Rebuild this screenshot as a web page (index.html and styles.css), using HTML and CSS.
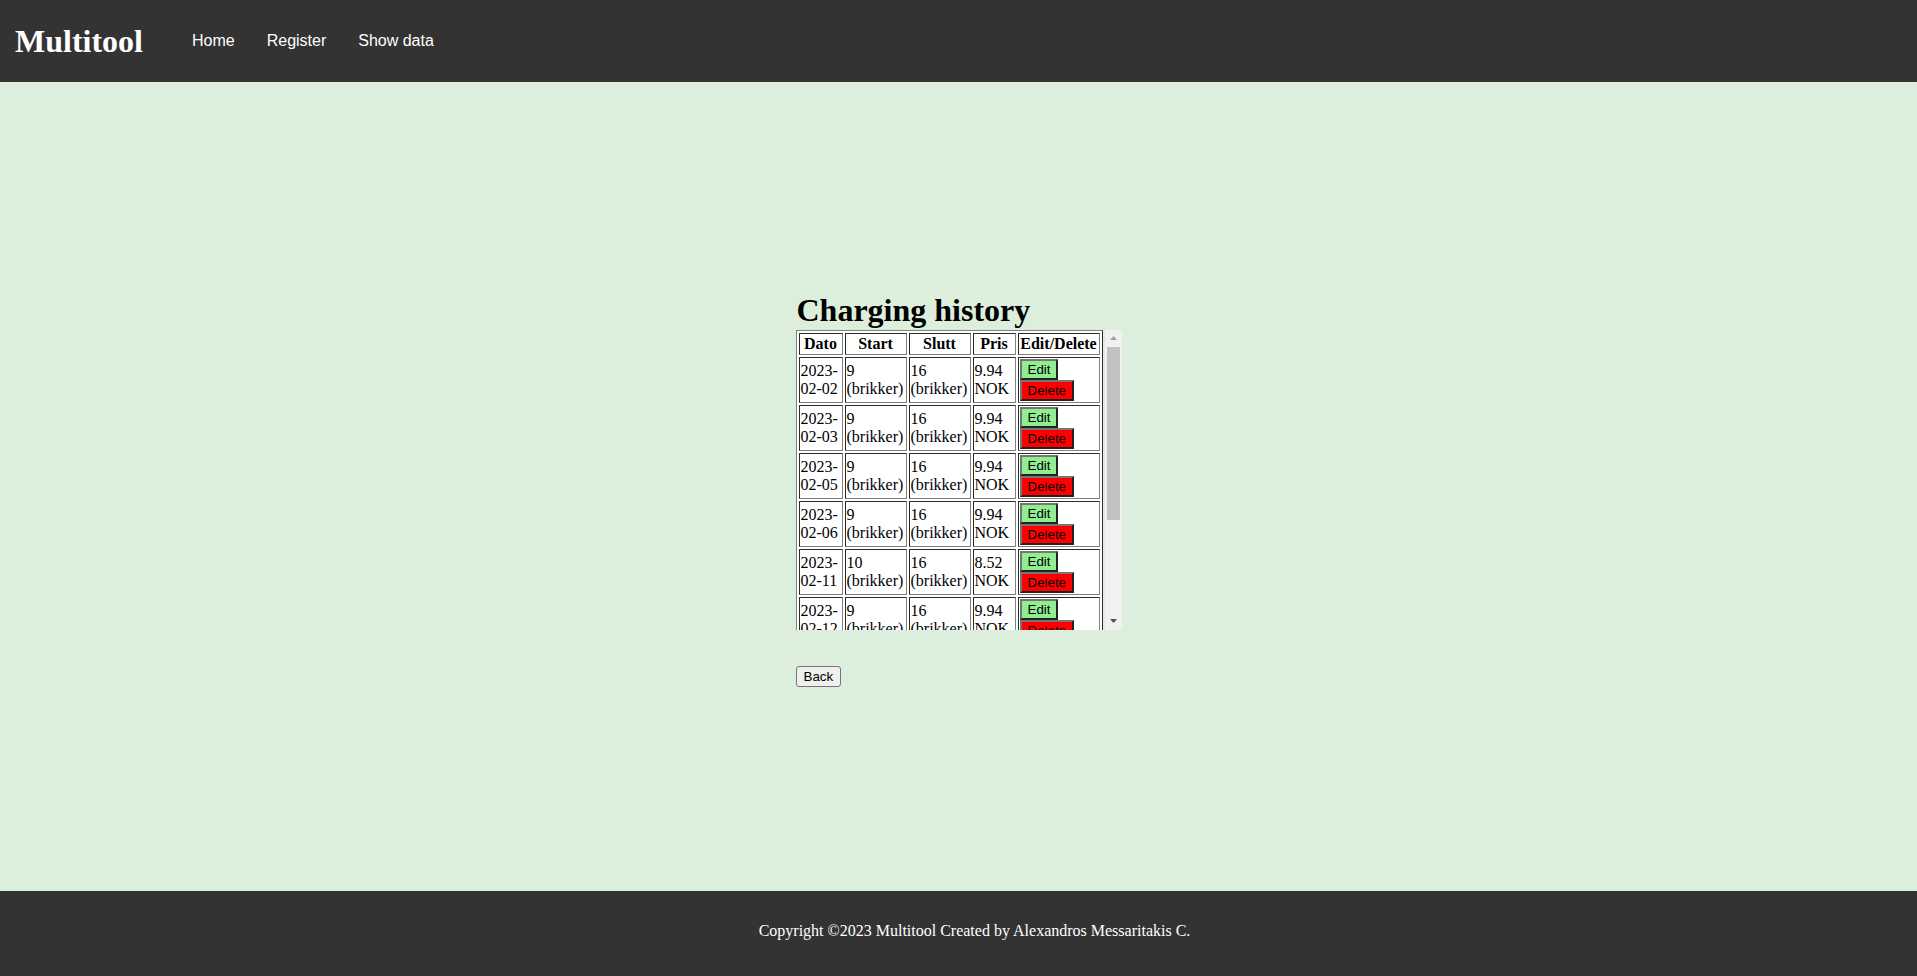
FILE: index.html
```html
<!DOCTYPE html>
<html lang="no">
<head>
<meta charset="utf-8">
<title>Multitool - Charging history</title>
<link rel="stylesheet" href="styles.css">
</head>
<body>
<header class="topbar">
  <div class="logo">Multitool</div>
  <nav class="nav">
    <a href="#" class="nav-link">Home</a>
    <a href="#" class="nav-link">Register</a>
    <a href="#" class="nav-link">Show data</a>
  </nav>
</header>
<main class="main">
  <div class="content">
    <h1 class="title">Charging history</h1>
    <div class="scroll-wrap">
      <div class="scroller">
        <table class="history">
          <thead>
            <tr>
              <th class="c-date">Dato</th>
              <th class="c-start">Start</th>
              <th class="c-end">Slutt</th>
              <th class="c-price">Pris</th>
              <th class="c-act">Edit/Delete</th>
            </tr>
          </thead>
          <tbody>
            <tr><td>2023-02-02</td><td>9 (brikker)</td><td>16 (brikker)</td><td>9.94 NOK</td><td><div class="act"><button class="btn-edit">Edit</button></div><div class="act"><button class="btn-del">Delete</button></div></td></tr>
            <tr><td>2023-02-03</td><td>9 (brikker)</td><td>16 (brikker)</td><td>9.94 NOK</td><td><div class="act"><button class="btn-edit">Edit</button></div><div class="act"><button class="btn-del">Delete</button></div></td></tr>
            <tr><td>2023-02-05</td><td>9 (brikker)</td><td>16 (brikker)</td><td>9.94 NOK</td><td><div class="act"><button class="btn-edit">Edit</button></div><div class="act"><button class="btn-del">Delete</button></div></td></tr>
            <tr><td>2023-02-06</td><td>9 (brikker)</td><td>16 (brikker)</td><td>9.94 NOK</td><td><div class="act"><button class="btn-edit">Edit</button></div><div class="act"><button class="btn-del">Delete</button></div></td></tr>
            <tr><td>2023-02-11</td><td>10 (brikker)</td><td>16 (brikker)</td><td>8.52 NOK</td><td><div class="act"><button class="btn-edit">Edit</button></div><div class="act"><button class="btn-del">Delete</button></div></td></tr>
            <tr><td>2023-02-12</td><td>9 (brikker)</td><td>16 (brikker)</td><td>9.94 NOK</td><td><div class="act"><button class="btn-edit">Edit</button></div><div class="act"><button class="btn-del">Delete</button></div></td></tr>
            <tr><td>2023-02-14</td><td>9 (brikker)</td><td>16 (brikker)</td><td>9.94 NOK</td><td><div class="act"><button class="btn-edit">Edit</button></div><div class="act"><button class="btn-del">Delete</button></div></td></tr>
            <tr><td>2023-02-17</td><td>10 (brikker)</td><td>16 (brikker)</td><td>8.52 NOK</td><td><div class="act"><button class="btn-edit">Edit</button></div><div class="act"><button class="btn-del">Delete</button></div></td></tr>
            <tr><td>2023-02-19</td><td>9 (brikker)</td><td>16 (brikker)</td><td>9.94 NOK</td><td><div class="act"><button class="btn-edit">Edit</button></div><div class="act"><button class="btn-del">Delete</button></div></td></tr>
          </tbody>
        </table>
      </div>
      <div class="sbar" aria-hidden="true">
        <div class="sbar-btn">
          <svg width="7" height="4" viewBox="0 0 7 4"><polygon points="0,4 7,4 3.5,0" fill="#a3a3a3"/></svg>
        </div>
        <div class="sbar-track">
          <div class="sbar-thumb"></div>
        </div>
        <div class="sbar-btn">
          <svg width="7" height="4" viewBox="0 0 7 4"><polygon points="0,0 7,0 3.5,4" fill="#505050"/></svg>
        </div>
      </div>
    </div>
    <div class="back-row"><button class="btn-back">Back</button></div>
  </div>
</main>
<footer class="footer">
  <p class="copy">Copyright ©2023 Multitool Created by Alexandros Messaritakis C.</p>
</footer>
</body>
</html>
```
FILE: styles.css
```css
html, body {
  margin: 0;
  padding: 0;
  height: 100%;
}
body {
  display: flex;
  flex-direction: column;
  font-family: "Liberation Serif", "Times New Roman", serif;
  font-size: 16px;
  background: #dcefdc;
  overflow: hidden;
}
.topbar {
  height: 82px;
  flex: none;
  background: #333333;
  display: flex;
  align-items: center;
  padding-left: 15px;
}
.logo {
  font-family: "Liberation Serif", serif;
  font-weight: bold;
  font-size: 32px;
  color: #ffffff;
  margin-right: 33px;
}
.nav {
  display: flex;
}
.nav-link {
  font-family: "Liberation Sans", Arial, sans-serif;
  font-size: 16px;
  color: #ffffff;
  text-decoration: none;
  padding: 0 16px;
}
.main {
  flex: 1;
  display: flex;
  align-items: center;
  justify-content: center;
}
.content {
  padding-top: 6px;
}
.title {
  margin: 0;
  font-size: 32px;
  font-weight: bold;
  line-height: 37.5px;
  color: #000;
  padding-left: 1px;
}
.scroll-wrap {
  display: flex;
  width: 326px;
  height: 300px;
}
.scroller {
  width: 309px;
  height: 300px;
  overflow: hidden;
}
.sbar {
  width: 17px;
  height: 300px;
  background: #f1f1f1;
  display: flex;
  flex-direction: column;
}
.sbar-btn {
  height: 17px;
  flex: none;
  display: flex;
  align-items: center;
  justify-content: center;
}
.sbar-track {
  flex: 1;
  padding: 0 2px;
}
.sbar-thumb {
  height: 173px;
  background: #c1c1c1;
}
.history {
  table-layout: fixed;
  width: 307px;
  border: 1px outset #808080;
  border-spacing: 2px;
  background: #ffffff;
}
.history th,
.history td {
  border: 1px inset #808080;
  padding: 1px;
  box-sizing: border-box;
  vertical-align: middle;
}
.history td {
  text-align: left;
}
.c-date { width: 44px; }
.c-start { width: 62px; }
.c-end { width: 62px; }
.c-price { width: 43px; }
.c-act { width: 82px; }
.act {
  line-height: normal;
}
button {
  font-family: "Liberation Sans", Arial, sans-serif;
  font-size: 13.333px;
  line-height: normal;
  margin: 0;
}
.btn-edit,
.btn-del {
  color: #000;
  border: 2px outset #767676;
  padding: 1px 6px;
  border-radius: 0;
}
.btn-edit {
  background-color: #90ee90;
}
.btn-del {
  background-color: #ff0000;
}
.back-row {
  margin-top: 36px;
}
.btn-back {
  color: #000;
  background: #efefef;
  border: 1px solid #767676;
  border-radius: 3px;
  padding: 2px 7px;
}
.footer {
  height: 85px;
  flex: none;
  background: #333333;
  box-sizing: border-box;
  padding: 31px 0 0 32px;
}
.copy {
  margin: 0;
  text-align: center;
  color: #ffffff;
  font-size: 16px;
}
```
